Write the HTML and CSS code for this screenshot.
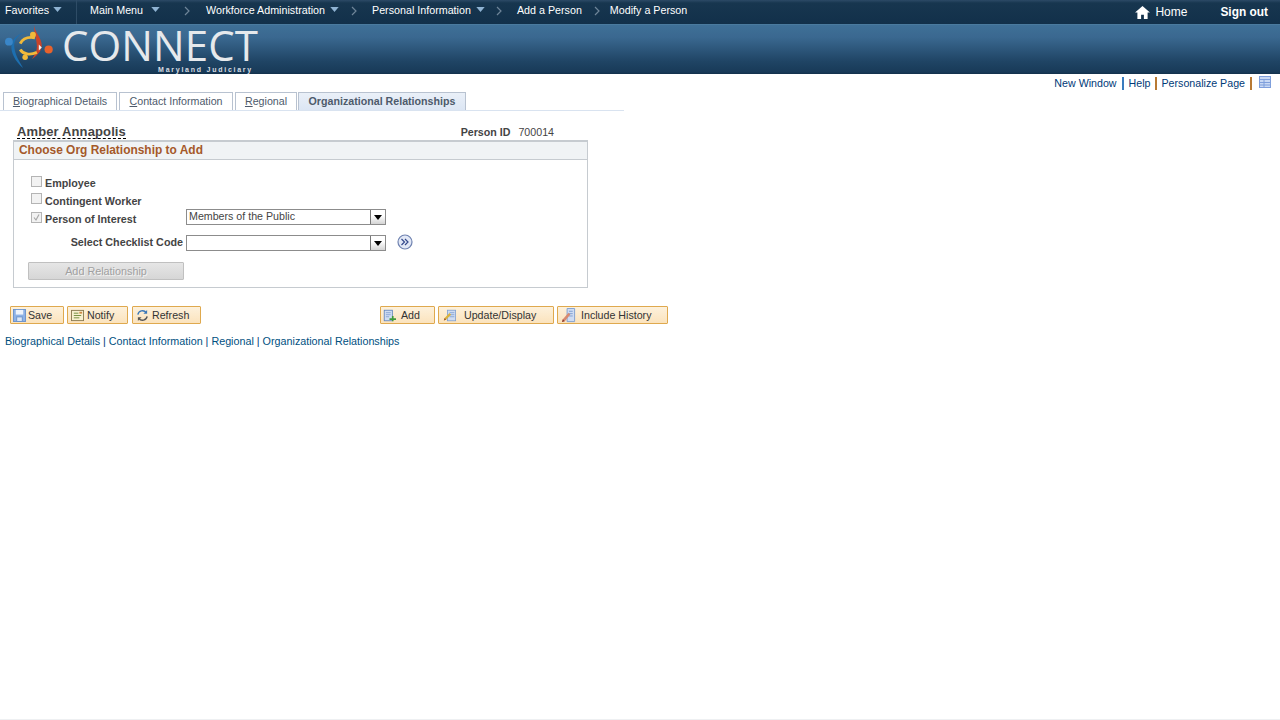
FILE: index.html
```html
<!DOCTYPE html>
<html lang="en">
<head>
<meta charset="utf-8">
<title>Organizational Relationships</title>
<link rel="stylesheet" href="styles.css">
</head>
<body>
<nav class="topnav">
  <a class="nav-item nav-fav">Favorites<svg class="tri" viewBox="0 0 10 6"><path d="M0 0h10L5 6z"/></svg></a>
  <a class="nav-item nav-main">Main Menu<svg class="tri" viewBox="0 0 10 6"><path d="M0 0h10L5 6z"/></svg></a>
  <svg class="chev chev-1" viewBox="0 0 6 10"><path d="M1 1l4 4-4 4"/></svg>
  <a class="nav-item">Workforce Administration<svg class="tri" viewBox="0 0 10 6"><path d="M0 0h10L5 6z"/></svg></a>
  <svg class="chev" viewBox="0 0 6 10"><path d="M1 1l4 4-4 4"/></svg>
  <a class="nav-item">Personal Information<svg class="tri" viewBox="0 0 10 6"><path d="M0 0h10L5 6z"/></svg></a>
  <svg class="chev chev-3" viewBox="0 0 6 10"><path d="M1 1l4 4-4 4"/></svg>
  <a class="nav-item">Add a Person</a>
  <svg class="chev chev-last" viewBox="0 0 6 10"><path d="M1 1l4 4-4 4"/></svg>
  <a class="nav-item">Modify a Person</a>
  <a class="home"><svg class="home-icon" viewBox="0 0 16 14"><path d="M8 0L0 7h2.500v7h4V9.500h3V14h4V7H16z"/></svg>Home</a>
  <a class="signout">Sign out</a>
</nav>
<header class="banner">
  <svg class="logo-mark" viewBox="0 0 56 50">
    <path d="M31 0c1 8 8 13 8 21 0 6-5 10-10 14 3-5 5-8 5-13 0-7-3-13-3-22z" fill="#c8432a"/>
    <path d="M25 7C15 9 10 15 11 23c1 8 5 14 9 21-6-5-11-12-12-20C7 15 15 8 25 7z" fill="#1d6fb0"/>
    <circle cx="5.500" cy="17" r="4" fill="#3a86c8"/>
    <circle cx="30" cy="10" r="3" fill="#f0b93a"/>
    <circle cx="46" cy="25" r="4.200" fill="#e8622c"/>
    <circle cx="22" cy="33" r="2.800" fill="#f0b93a"/>
    <path d="M17 19C20 13 26 12 32 13" fill="none" stroke="#f0b93a" stroke-width="3"/>
    <path d="M17 25c3 5 10 6 17 3" fill="none" stroke="#f0b93a" stroke-width="3"/>
    <path d="M36 20l3 3-3 3z" fill="#f4f4f4"/>
  </svg>
  <div class="brand">
    <span class="brand-name">CONNECT</span>
    <span class="brand-sub">Maryland Judiciary</span>
  </div>
</header>
<div class="tools">
  <a>New Window</a><i class="sep sep-blue"></i><a>Help</a><i class="sep"></i><a>Personalize Page</a><i class="sep"></i>
  <svg class="grid-icon" viewBox="0 0 12 12"><rect x=".5" y=".5" width="11" height="11" fill="#c9d9f4" stroke="#7f9fdc"/><path d="M1 3.500h10M1 6.500h10M1 9h10M5 4v7" stroke="#7f9fdc" fill="none"/></svg>
</div>
<div class="tabs">
  <a class="tab"><u>B</u>iographical Details</a>
  <a class="tab"><u>C</u>ontact Information</a>
  <a class="tab tab-regional"><u>R</u>egional</a>
  <a class="tab tab-active">Organizational Relationships</a>
</div>
<div class="person">
  <span class="person-name">Amber Annapolis</span>
  <span class="person-id"><b>Person ID</b><span>700014</span></span>
</div>
<section class="panel">
  <h2 class="panel-title">Choose Org Relationship to Add</h2>
  <div class="form">
    <div class="row row-check"><span class="check"></span><span class="label">Employee</span></div>
    <div class="row row-check"><span class="check check-up"></span><span class="label">Contingent Worker</span></div>
    <div class="row row-check">
      <span class="check"><svg viewBox="0 0 9 9"><path d="M2 4.500l2 2.500 3-5.500" fill="none" stroke="#a8a8a8" stroke-width="1.200"/></svg></span>
      <span class="label label-fixed">Person of Interest</span>
      <div class="select select-up"><span>Members of the Public</span><i class="arrow"><svg viewBox="0 0 8 5"><path d="M0 0h8L4 5z"/></svg></i></div>
    </div>
    <div class="row row-code">
      <span class="label label-code">Select Checklist Code</span>
      <div class="select"><span></span><i class="arrow"><svg viewBox="0 0 8 5"><path d="M0 0h8L4 5z"/></svg></i></div>
      <svg class="go" viewBox="0 0 16 16"><circle cx="8" cy="8" r="7" fill="#e2e8f6" stroke="#6f82b0" stroke-width="1.200"/><path d="M4.500 5l3 3-3 3M8 5l3 3-3 3" fill="none" stroke="#34498c" stroke-width="1.200"/></svg>
    </div>
    <button class="add-rel" type="button">Add Relationship</button>
  </div>
</section>
<div class="actions">
  <div class="group">
    <a class="btn btn-save"><svg viewBox="0 0 14 14"><rect x=".5" y=".5" width="13" height="13" fill="#8fb2e6" stroke="#6a92cc"/><rect x="3" y="1" width="8" height="5" fill="#eef3fb"/><rect x="4" y="8.500" width="6" height="5" fill="#dbe6f6" stroke="#6a92cc"/></svg>Save</a>
    <a class="btn btn-notify"><svg viewBox="0 0 14 14"><rect x=".5" y="1.500" width="13" height="11" fill="#f8f0d0" stroke="#8a7a50"/><path d="M3 4.500h5M3 7h8M3 9.500h6" stroke="#6f8a3a"/><rect x="9" y="3" width="3" height="2" fill="#c84"/></svg>Notify</a>
    <a class="btn btn-refresh"><svg viewBox="0 0 14 14"><path d="M2 6a5 5 0 0 1 9-2" fill="none" stroke="#3b78b8" stroke-width="1.500"/><path d="M12 1v4H8z" fill="#3b78b8"/><path d="M12 8a5 5 0 0 1-9 2" fill="none" stroke="#555" stroke-width="1.500"/><path d="M2 13V9h4z" fill="#555"/></svg>Refresh</a>
  </div>
  <div class="group group-right">
    <a class="btn btn-add"><svg viewBox="0 0 16 14"><rect x="1.500" y=".5" width="10" height="13" fill="#cfdcf2" stroke="#5a80bc"/><path d="M3.500 3.500h6M3.500 6h6M3.500 8.500h4" stroke="#7f9fd0"/><path d="M11 7.500h2v3h3v2h-3v1.500h-2v-1.500H8v-2h3z" fill="#3f9a3a"/></svg>Add</a>
    <a class="btn btn-update"><svg viewBox="0 0 16 14"><rect x="5.500" y=".5" width="10" height="13" fill="#cfdcf2" stroke="#7f9fd0"/><path d="M8 3.500h6M8 6h6M8 8.500h6" stroke="#7f9fd0"/><path d="M1 13l1-3 6-6 2 2-6 6z" fill="#d9b23c"/><path d="M1 13l1-3 2 2z" fill="#a0522d"/></svg>Update/Display</a>
    <a class="btn btn-history"><svg viewBox="0 0 16 16"><path d="M6.500.5h8v14h-8z" fill="#cfdcf2" stroke="#7f9fd0"/><path d="M8.500 3.500h4M8.500 6h4M8.500 8.500h4" stroke="#7f9fd0"/><path d="M1 15l1-3 6-7 2 2-6 7z" fill="#d88a70"/><path d="M1 15l1-3 2 2z" fill="#8a3a2a"/></svg>Include History</a>
  </div>
</div>
<div class="footer-links">
  <a>Biographical Details</a> | <a>Contact Information</a> | <a>Regional</a> | <a>Organizational Relationships</a>
</div>
</body>
</html>
```
FILE: styles.css
```css
* { box-sizing: border-box; }
html, body { height: 100%; }
body {
  margin: 0;
  overflow: hidden;
  background: #fff;
  font-family: "Liberation Sans", Arial, sans-serif;
  font-size: 10.670px;
  color: #333;
  border-bottom: 1px solid #eef0f2;
}

/* top bar */
.topnav {
  display: flex;
  align-items: flex-start;
  height: 24px;
  padding: 4px 12px 0 5px;
  font-size: 10.720px;
  color: #fff;
  background: linear-gradient(#2c4a66 0, #17364f 3px, #12304a 100%);
  line-height: 13px;
}
.nav-item { display: flex; align-items: center; color: #fff; white-space: nowrap; }
.tri { width: 9px; height: 5px; margin: -3px 0 0 5px; fill: #8fb3d3; }
.nav-fav { position: relative; width: 72px; }
.nav-fav .tri { margin-left: 4px; }
.nav-fav::after {
  content: "";
  position: absolute;
  top: -4px;
  right: 0;
  width: 1px;
  height: 24px;
  background: #2e4c66;
}
.nav-main { margin-left: 13px; }
.nav-main .tri { margin-left: 8px; }
.chev { width: 6px; height: 10px; margin: 2px 15px 0 12px; fill: none; stroke: #6f8599; stroke-width: 1.200; flex: none; }
.chev-1 { margin: 2px 16px 0 24px; }
.chev-3 { margin-left: 11px; }
.chev-last { margin-right: 10px; }
.home { display: flex; align-items: center; margin-left: auto; margin-top: 2px; font-size: 12px; color: #fff; }
.home-icon { width: 15px; height: 13px; margin-right: 5px; fill: #fff; }
.signout { margin: 2px 0 0 33px; font-size: 11.900px; font-weight: bold; color: #fff; }

/* banner */
.banner {
  display: flex;
  align-items: flex-start;
  height: 50px;
  padding-left: 3px;
  background: linear-gradient(#3f7097 0, #3a6890 25%, #1f4464 75%, #183a58 96%, #12304a 100%);
  border-top: 1px solid #4a7a9e;
}
.logo-mark { width: 56px; height: 49px; flex: none; }
.brand { display: flex; flex-direction: column; width: 197px; margin-left: 3px; }
.brand-name {
  font-family: "Open Sans", sans-serif;
  font-size: 42px;
  font-weight: 500;
  line-height: 40px;
  color: #e6e9ec;
  white-space: nowrap;
  letter-spacing: .1px;
}
.brand-sub {
  text-align: right;
  padding-right: 6px;
  font-size: 7px;
  line-height: 9px;
  font-weight: bold;
  letter-spacing: 1.750px;
  color: #d8dde2;
  white-space: nowrap;
}

/* page tools */
.tools {
  display: flex;
  justify-content: flex-end;
  align-items: center;
  height: 18px;
  padding: 0 9px 0 0;
  color: #003a78;
}
.sep { width: 2px; height: 13px; margin: 0 4px 0 5px; background: #b87a34; }
.sep-blue { background: #3a7cbe; margin-right: 5px; }
.grid-icon { width: 12px; height: 12px; margin-left: 3px; margin-top: -2px; }

/* tabs */
.tabs {
  display: flex;
  gap: 2px;
  width: 624px;
  height: 19px;
  padding-left: 3px;
  border-bottom: 1px solid #d9e3f0;
}
.tab {
  width: 114px;
  height: 18px;
  padding-top: 2px;
  text-align: center;
  color: #4d5a6b;
  background: #fff;
  border: 1px solid #b8c2d0;
  border-bottom: 0;
}
.tab-regional { width: 62px; }
.tab-active {
  width: 168px;
  margin-left: -1px;
  font-weight: bold;
  background: linear-gradient(#eaf0f8, #dce6f4);
}

/* person */
.person {
  display: flex;
  width: 537px;
  margin: 13px 0 0 17px;
  height: 16px;
  justify-content: space-between;
  line-height: 15px;
}
.person-name {
  height: 15px;
  font-size: 13px;
  font-weight: bold;
  letter-spacing: .12px;
  color: #444;
  border-bottom: 1px dashed #000;
}
.person-id { color: #444; padding-top: 1px; }
.person-id b { margin-right: 8px; }

/* panel */
.panel {
  width: 575px;
  height: 148px;
  margin-left: 13px;
  border: 1px solid #c6cbd0;
  border-top-width: 2px;
}
.panel-title {
  margin: 0;
  height: 18px;
  padding: 0 0 0 5px;
  font-size: 11.950px;
  line-height: 16px;
  font-weight: bold;
  color: #a5592a;
  background: #f0f3f5;
  border-bottom: 1px solid #c6cbd0;
}
.form { padding: 14px 0 0 14px; }
.row { display: flex; align-items: center; }
.row-check { height: 18px; padding-left: 3px; }
.check {
  display: block;
  width: 11px;
  height: 11px;
  margin: -3px 3px 0 0;
  padding: 0;
  background: #f2f2f2;
  border: 1px solid #b4b4b4;
  flex: none;
}
.check-up { margin-top: -5px; }
.check svg { display: block; width: 9px; height: 9px; }
.label { font-size: 10.750px; font-weight: bold; color: #444; white-space: nowrap; }
.label-fixed { width: 141px; }
.select {
  display: flex;
  justify-content: space-between;
  width: 200px;
  height: 16px;
  padding-left: 2px;
  line-height: 13px;
  color: #444;
  background: #fff;
  border: 1px solid #8c8c8c;
}
.select-up { margin-top: -4px; }
.arrow {
  display: flex;
  align-items: center;
  justify-content: center;
  width: 15px;
  height: 14px;
  background: linear-gradient(#fff, #fff 40%, #d4d4d4);
  border-left: 1px solid #777;
}
.arrow svg { width: 8px; height: 5px; fill: #000; }
.row-code { height: 16px; margin-top: 7px; }
.label-code { width: 158px; padding-right: 3px; text-align: right; margin-top: -2px; }
.go { width: 16px; height: 16px; margin: -2px 0 0 11px; }
.add-rel {
  display: block;
  width: 156px;
  height: 18px;
  margin: 11px 0 0 0;
  padding: 0;
  font: 10.800px "Liberation Sans", Arial, sans-serif;
  color: #a0a0a0;
  text-shadow: 1px 1px 0 #f4f4f4;
  background: linear-gradient(#e6e6e6, #d6d6d6);
  border: 1px solid #c0c0c0;
  border-radius: 1px;
}

/* actions */
.actions { display: flex; margin: 18px 0 0 10px; }
.group { display: flex; gap: 3px; }
.group-right { margin-left: 179px; }
.btn {
  display: flex;
  align-items: center;
  height: 18px;
  padding-left: 2px;
  color: #333;
  background: linear-gradient(#fdf1dc, #fbe3bd);
  border: 1px solid #dfa94e;
  border-radius: 1px;
  white-space: nowrap;
}
.btn svg { width: 13px; height: 13px; margin-right: 2px; flex: none; }
.btn-save { width: 54px; }
.btn-notify { width: 61px; padding-left: 3px; }
.btn-notify svg { margin-right: 3px; }
.btn-refresh { width: 69px; margin-left: 1px; padding-left: 3px; }
.btn-refresh svg { margin-right: 3px; }
.btn-add { width: 55px; }
.btn-add svg { margin-right: 5px; }
.btn-update { width: 116px; padding-left: 4px; }
.btn-update svg { margin-right: 8px; }
.btn-history { width: 111px; padding-left: 3px; }
.btn-history svg { width: 15px; height: 15px; margin-right: 5px; }

/* footer links */
.footer-links { margin: 11px 0 0 5px; font-size: 10.750px; line-height: 13px; color: #003a78; }
.footer-links a { color: #00507f; }
```
